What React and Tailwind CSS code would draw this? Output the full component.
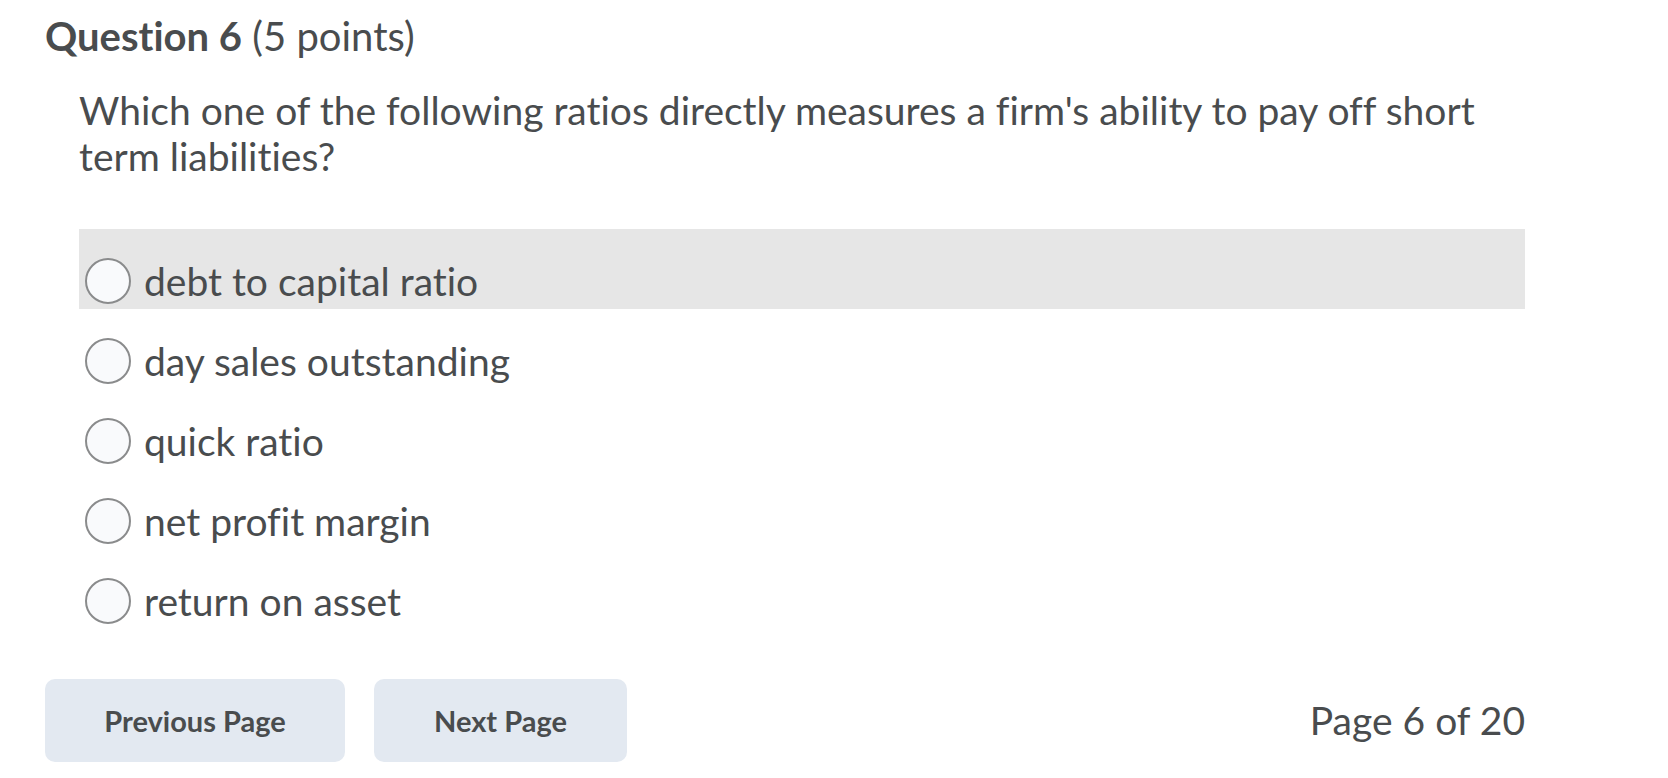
import React from "react";

const options = [
  "debt to capital ratio",
  "day sales outstanding",
  "quick ratio",
  "net profit margin",
  "return on asset",
];

function Radio() {
  return (
    <span className="block w-[46px] h-[46px] shrink-0 rounded-full border-2 border-[#8a8b8c] bg-[#f9fafc]" />
  );
}

export default function App() {
  return (
    <div
      className="w-[1668px] h-[778px] bg-white text-[#494c4e] pl-[45px] pt-[14px] [font-variant-ligatures:none]"
      style={{ fontFamily: "Lato, 'Noto Sans', sans-serif" }}
    >
      <h2 className="text-[40px] leading-[44px]">
        <span className="font-bold">Question 6</span> (5 points)
      </h2>

      <div className="ml-[34px] w-[1446px]">
        <p className="mt-[29px] text-[39px] leading-[46px]">
          Which one of the following ratios directly measures a firm's ability to pay off short term liabilities?
        </p>

        <ul className="mt-[50px]">
          {options.map((o, i) => (
            <li
              key={o}
              className={
                "h-[80px] flex items-center gap-[13px] pl-[6px] pt-[24px] " +
                (i === 0 ? "bg-[#e6e6e6]" : "")
              }
            >
              <Radio />
              <span className="text-[39px] leading-[56px]">{o}</span>
            </li>
          ))}
        </ul>
      </div>

      <div className="mt-[50px] w-[1480px] flex items-center">
        <button className="w-[300px] h-[83px] rounded-[10px] bg-[#e3e9f1] text-[29px] font-bold text-[#494c4e]">
          Previous Page
        </button>
        <button className="ml-[29px] w-[253px] h-[83px] rounded-[10px] bg-[#e3e9f1] text-[29px] font-bold text-[#494c4e]">
          Next Page
        </button>
        <span className="ml-auto text-[39px]">Page 6 of 20</span>
      </div>
    </div>
  );
}
